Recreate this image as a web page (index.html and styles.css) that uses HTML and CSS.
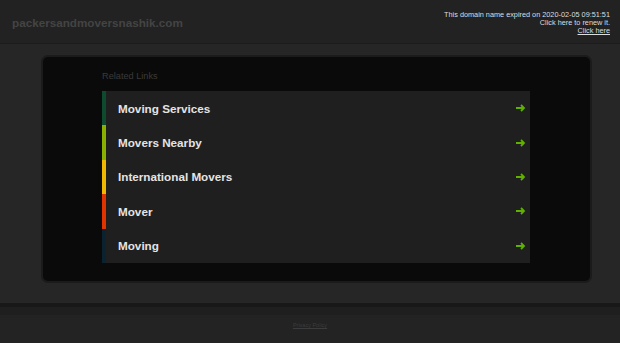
FILE: index.html
```html
<!DOCTYPE html>
<html lang="en">
<head>
  <meta charset="UTF-8">
  <meta name="viewport" content="width=device-width, initial-scale=1.0">
  <title>packersandmoversnashik.com</title>
  <link rel="stylesheet" href="styles.css">
</head>
<body>
  <div class="header">
    <div class="domain">packersandmoversnashik.com</div>
    <div class="expired">
      This domain name expired on 2020-02-05 09:51:51<br>
      Click here to renew it.<br>
      <a href="#">Click here</a>
    </div>
  </div>
  <div class="main">
    <div class="box">
      <div class="box-inner">
        <div class="label">Related Links</div>
        <ul class="links">
          <li class="c1"><span>Moving Services</span><svg viewBox="0 0 10 8"><path d="M0 4H8M5 1L8 4L5 7"/></svg></li>
          <li class="c2"><span>Movers Nearby</span><svg viewBox="0 0 10 8"><path d="M0 4H8M5 1L8 4L5 7"/></svg></li>
          <li class="c3"><span>International Movers</span><svg viewBox="0 0 10 8"><path d="M0 4H8M5 1L8 4L5 7"/></svg></li>
          <li class="c4"><span>Mover</span><svg viewBox="0 0 10 8"><path d="M0 4H8M5 1L8 4L5 7"/></svg></li>
          <li class="c5"><span>Moving</span><svg viewBox="0 0 10 8"><path d="M0 4H8M5 1L8 4L5 7"/></svg></li>
        </ul>
      </div>
    </div>
  </div>
  <div class="footer-line"></div>
  <div class="footer"><a href="#">Privacy Policy</a></div>
</body>
</html>
```

FILE: styles.css
```css
body {
  margin: 0;
  background-color: #262626;
  font-family: "Liberation Sans", Arial, sans-serif;
  height: 343px;
  overflow: hidden;
}
.header {
  height: 43px;
  background-color: #222;
  border-bottom: 1px solid #1c1c1c;
  display: flex;
  justify-content: space-between;
  align-items: center;
  padding: 0 10px 0 12px;
}
.domain {
  font-size: 11.7px;
  font-weight: bold;
  color: #444;
  margin-top: 1px;
}
.expired {
  font-size: 7.3px;
  line-height: 8px;
  color: #ddd;
  text-align: right;
  margin-top: 3px;
}
.expired a {
  color: #ddd;
}
.main {
  padding: 11px 28px 0 41px;
  height: 248px;
}
.box {
  background-color: #1b1b1b;
  border-radius: 7px;
  padding: 2px;
  height: 224px;
}
.box-inner {
  background-color: #0a0a0a;
  border-radius: 5px;
  height: 100%;
  padding: 14px 60px 0 59px;
  box-sizing: border-box;
}
.label {
  font-size: 9.2px;
  color: #3a3a3a;
  height: 20px;
}
.links {
  list-style: none;
  margin: 0;
  padding: 0;
  background-color: #1f1f1f;
}
.links li {
  height: 34.4px;
  display: flex;
  align-items: center;
  justify-content: space-between;
  border-left: 4px solid #0e4a2d;
  padding: 0 4px 0 12px;
  box-sizing: border-box;
}
.links span {
  font-size: 11.7px;
  font-weight: bold;
  color: #e4e4e4;
}
.links svg {
  width: 10px;
  height: 8px;
  fill: none;
  stroke: #5fb000;
  stroke-width: 1.8;
}
.links .c2 { border-left-color: #89b000; }
.links .c3 { border-left-color: #f0b800; }
.links .c4 { border-left-color: #e03400; }
.links .c5 { border-left-color: #0b2230; }
.footer-line {
  height: 4px;
  background-color: #181818;
  border-bottom: 8px solid #1f1f1f;
}
.footer {
  text-align: center;
  padding-top: 2px;
  background-color: #232323;
  height: 40px;
  line-height: 10px;
}
.footer a {
  font-size: 5.5px;
  color: #3c3c3c;
}
```
